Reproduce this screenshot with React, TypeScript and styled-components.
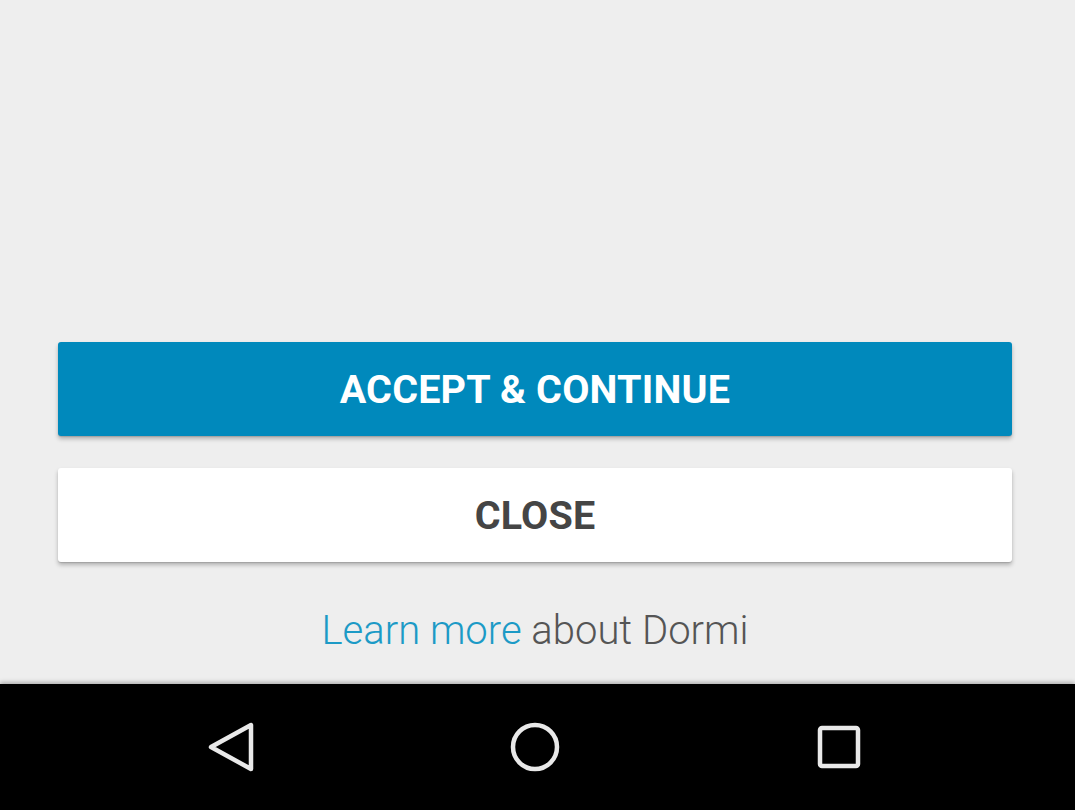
import React from "react";
import styled, { createGlobalStyle } from "styled-components";

const Global = createGlobalStyle`
  html, body { margin: 0; padding: 0; background: #eeeeee; }
  body { font-family: Roboto, "Noto Sans", sans-serif; }
`;

const Screen = styled.div`
  width: 1075px;
  height: 810px;
  display: flex;
  flex-direction: column;
  background: #eeeeee;
  overflow: hidden;
`;

const Main = styled.main`
  flex: 1;
  display: flex;
  flex-direction: column;
  justify-content: flex-end;
  padding: 0 63px 0 58px;
`;

const Actions = styled.div`
  display: flex;
  flex-direction: column;
  gap: 32px;
`;

const Button = styled.button<{ $primary?: boolean }>`
  height: 94px;
  border: none;
  border-radius: 3px;
  background: ${(p) => (p.$primary ? "#0089bc" : "#ffffff")};
  color: ${(p) => (p.$primary ? "#ffffff" : "#454545")};
  font-family: Roboto, "Noto Sans", sans-serif;
  font-weight: 700;
  font-size: 39.5px;
  letter-spacing: 0.2px;
  box-shadow: 0 3px 4px rgba(0, 0, 0, 0.25), 0 1px 1px rgba(0, 0, 0, 0.12);
  cursor: pointer;
`;

const Learn = styled.p`
  margin: 41px 0 25px;
  height: 56px;
  line-height: 56px;
  text-align: center;
  font-family: Roboto, "Noto Sans", sans-serif;
  font-weight: 300;
  font-size: 40px;
  color: #555555;
`;

const LinkText = styled.a`
  color: #1c9ac6;
  text-decoration: none;
`;

const NavBar = styled.nav`
  height: 126px;
  background: #000;
  display: flex;
  justify-content: center;
  align-items: center;
  padding-right: 5px;
  box-shadow: 0 -2px 4px rgba(0, 0, 0, 0.25);
`;

const NavSlot = styled.div`
  width: 304px;
  display: flex;
  justify-content: center;
  align-items: center;
`;

const Icon = styled.svg`
  width: 50px;
  height: 50px;
  display: block;
  fill: none;
  stroke: #e9e9e9;
  stroke-width: 4.5;
  stroke-linejoin: round;
  stroke-linecap: round;
`;

export default function App() {
  return (
    <Screen>
      <Global />
      <Main>
        <Actions>
          <Button $primary>ACCEPT &amp; CONTINUE</Button>
          <Button>CLOSE</Button>
        </Actions>
        <Learn>
          <LinkText href="#">Learn more</LinkText> about Dormi
        </Learn>
      </Main>
      <NavBar>
        <NavSlot>
          <Icon viewBox="0 0 50 50">
            <path d="M45 3 L45 47 L5 25 Z" />
          </Icon>
        </NavSlot>
        <NavSlot>
          <Icon viewBox="0 0 50 50">
            <circle cx="25" cy="25" r="22" />
          </Icon>
        </NavSlot>
        <NavSlot>
          <Icon viewBox="0 0 50 50">
            <rect x="6" y="6" width="38" height="38" rx="2" />
          </Icon>
        </NavSlot>
      </NavBar>
    </Screen>
  );
}
